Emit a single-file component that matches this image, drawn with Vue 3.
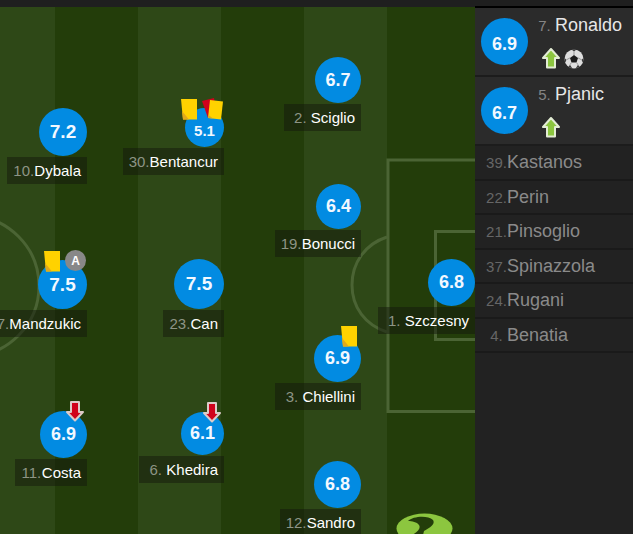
<script setup>
const players = [
  { n: '10', name: 'Dybala', rating: '7.2', size: 48, right: 388, top: 101 },
  { n: '17', name: 'Mandzukic', rating: '7.5', size: 49, right: 388, top: 253, marks: ['yellow', 'assist'] },
  { n: '11', name: 'Costa', rating: '6.9', size: 47, right: 388, top: 404, marks: ['off'] },
  { n: '30', name: 'Bentancur', rating: '5.1', size: 39, right: 251, top: 101, marks: ['yellow', 'second'] },
  { n: '23', name: 'Can', rating: '7.5', size: 50, right: 251, top: 252 },
  { n: '6', name: 'Khedira', rating: '6.1', size: 43, right: 251, top: 405, marks: ['off'] },
  { n: '2', name: 'Sciglio', rating: '6.7', size: 46, right: 114, top: 50 },
  { n: '19', name: 'Bonucci', rating: '6.4', size: 45, right: 114, top: 177 },
  { n: '3', name: 'Chiellini', rating: '6.9', size: 47, right: 114, top: 328, marks: ['yellow'] },
  { n: '12', name: 'Sandro', rating: '6.8', size: 47, right: 114, top: 454 },
  { n: '1', name: 'Szczesny', rating: '6.8', size: 47, right: 0, top: 252 },
]
const used = [
  { n: '7', name: 'Ronaldo', rating: '6.9', goal: true },
  { n: '5', name: 'Pjanic', rating: '6.7' },
]
const bench = [
  { n: '39', name: 'Kastanos' },
  { n: '22', name: 'Perin' },
  { n: '21', name: 'Pinsoglio' },
  { n: '37', name: 'Spinazzola' },
  { n: '24', name: 'Rugani' },
  { n: '4', name: 'Benatia' },
]
</script>

<template>
  <main class="lineup">
    <section class="pitch">
      <svg class="lines" viewBox="0 0 475 527" aria-hidden="true">
        <g fill="none" stroke="#4b6434" stroke-width="3">
          <circle cx="-31" cy="279" r="70" />
          <path d="M475 153H388V404.500H475" />
          <path d="M475 224.500H435.500V332.500H475" />
          <path d="M387 230C365 237 352 256 352 278C352 300 365 318 387 325" />
        </g>
        <ellipse cx="424.500" cy="521.500" rx="28" ry="15" fill="#8cc63f" />
        <path d="M408 514C413 509 428 508 433 513C436 518 428 521 424 524L423 528H412C418 525 421 521 419 518C417 515 412 514 408 514Z" fill="#233d0a" />
      </svg>
      <article
        v-for="p in players"
        :key="p.name"
        class="player"
        :style="{ right: p.right + 'px', top: p.top + 'px' }"
      >
        <div class="rating" :class="{ small: p.size < 42, big: p.size > 47 }" :style="{ width: p.size + 'px', height: p.size + 'px' }">
          {{ p.rating }}
          <div v-if="p.marks" class="marks" :class="{ pair: p.marks.length > 1, sub: p.marks[0] === 'off' }">
            <template v-for="m in p.marks" :key="m">
              <svg v-if="m === 'yellow'" width="16" height="22" viewBox="0 0 16 22">
                <path d="M0 1H16V21.500H2Z" fill="#ffd200" />
                <path d="M1 13L8 21.500H2Z" fill="#e0a91c" />
              </svg>
              <svg v-else-if="m === 'second'" width="21" height="22" viewBox="0 0 21 22">
                <path d="M0 3L12 0L15 17L6 20Z" fill="#d0021b" />
                <path d="M8 2L21 3.500L19 21.500L6 20Z" fill="#ffd200" />
                <path d="M6.500 17L11 20.600L6 20Z" fill="#e0a91c" />
              </svg>
              <span v-else-if="m === 'assist'" class="assist">A</span>
              <svg v-else width="18" height="21" viewBox="0 0 18 21">
                <path d="M5 1H13V11H17L9 19.500L1 11H5Z" fill="#d0021b" stroke="#dccbc8" stroke-width="2" stroke-linejoin="round" />
              </svg>
            </template>
          </div>
        </div>
        <div class="tag"><span class="num">{{ p.n }}.</span><span>{{ p.name }}</span></div>
      </article>
    </section>

    <aside class="subs">
      <ul class="used">
        <li v-for="s in used" :key="s.name">
          <div class="rating sub-rating">{{ s.rating }}</div>
          <div class="info">
            <div class="title"><span class="num">{{ s.n }}.</span><span class="name">{{ s.name }}</span></div>
            <div class="icons">
              <svg width="18" height="21" viewBox="0 0 18 21">
                <path d="M5 19.500H13V10H17L9 1L1 10H5Z" fill="#8cc63f" stroke="#e3edd4" stroke-width="2" stroke-linejoin="round" />
              </svg>
              <svg v-if="s.goal" width="20" height="20" viewBox="0 0 20 20">
                <circle cx="10" cy="10" r="9.500" fill="#dedede" />
                <path d="M10 6L14 8.900L12.500 13.400H7.500L6 8.900Z" fill="#1c1c1c" />
                <path d="M7.500 .6L10 2.400L12.500 .6A10 10 0 0 0 7.500 .6ZM19.500 9L17.600 10.800L18.600 13.600A10 10 0 0 0 19.500 9ZM.5 9L2.400 10.800L1.400 13.600A10 10 0 0 1 .5 9ZM4.600 17.800L6 15.800L8.200 19.200A10 10 0 0 1 4.600 17.800ZM15.400 17.800L14 15.800L11.800 19.200A10 10 0 0 0 15.400 17.800Z" fill="#3a3a3a" />
                <path d="M10 2.400V6M14 8.900L17.600 10.800M12.500 13.400L14 15.800M7.500 13.400L6 15.800M6 8.900L2.400 10.800" stroke="#999" />
              </svg>
            </div>
          </div>
        </li>
      </ul>
      <ul class="bench">
        <li v-for="s in bench" :key="s.name"><span class="num">{{ s.n }}.</span><span class="name">{{ s.name }}</span></li>
      </ul>
    </aside>
  </main>
</template>

<style>
body {
  margin: 0;
  background: #1f1f1f;
}
</style>

<style scoped>
.lineup {
  display: grid;
  grid-template-columns: 1fr 158px;
  box-sizing: border-box;
  min-height: 100vh;
  padding-top: 7px;
  font-family: "Liberation Sans", Arial, sans-serif;
  background: #1f1f1f;
}
.pitch {
  position: relative;
  overflow: hidden;
  background: repeating-linear-gradient(to left, #233d0a 0 83px, #2e4817 83px 166px) right 5px top / 100% 100% no-repeat, #233d0a;
}
.lines {
  position: absolute;
  top: 0;
  right: 0;
  width: 475px;
}
.player {
  position: absolute;
  display: flex;
  flex-direction: column;
  align-items: flex-end;
  gap: 1px;
}
.rating {
  position: relative;
  display: flex;
  flex-shrink: 0;
  box-sizing: border-box;
  align-items: center;
  justify-content: center;
  border-radius: 50%;
  background: #028be2;
  color: #f2f8ff;
  font-size: 18px;
  font-weight: 700;
}
.rating.small {
  padding-top: 6px;
  font-size: 15px;
}
.rating.big {
  font-size: 19px;
}
.marks {
  position: absolute;
  top: -10px;
  right: 4px;
  display: flex;
}
.marks.pair {
  right: 1px;
  gap: 5px;
}
.marks.sub {
  right: 3px;
}
.assist {
  width: 21px;
  height: 21px;
  border-radius: 50%;
  background: #888;
  color: #fff;
  font-size: 12px;
  line-height: 22px;
  text-align: center;
}
.tag {
  display: flex;
  padding: 0 6px;
  background: rgba(20, 24, 12, 0.5);
  color: #fff;
  font-size: 15px;
  line-height: 27px;
  white-space: nowrap;
}
.num {
  width: 21px;
  color: #8d9485;
  font-size: 15px;
  text-align: center;
}
.subs {
  margin-top: -1px;
  border-top: 2px solid #000;
  background: #222;
}
ul {
  margin: 0;
  padding: 0;
  list-style: none;
}
.used li {
  display: flex;
  gap: 6px;
  padding: 7px 5px 6px 6px;
  border-bottom: 2px solid #1c1c1c;
  background: #2b2b2b;
}
.sub-rating {
  width: 47px;
  height: 47px;
  margin-top: 3px;
  padding-top: 5px;
}
.title,
.bench li {
  display: flex;
  align-items: baseline;
}
.title {
  line-height: 20px;
}
.title .num {
  color: #858585;
  line-height: 16px;
}
.title .name {
  color: #e6e6e6;
}
.name {
  font-size: 18px;
}
.icons {
  display: flex;
  align-items: center;
  gap: 4px;
  padding: 13px 0 0 8px;
}
.bench {
  display: grid;
  grid-auto-rows: 1fr;
  min-height: 207px;
}
.bench li {
  padding-left: 11px;
  border-bottom: 2px solid #1a1a1a;
  line-height: 32px;
}
.bench .num {
  color: #666;
  line-height: 16px;
}
.bench .name {
  color: #8a8a8a;
}
</style>
